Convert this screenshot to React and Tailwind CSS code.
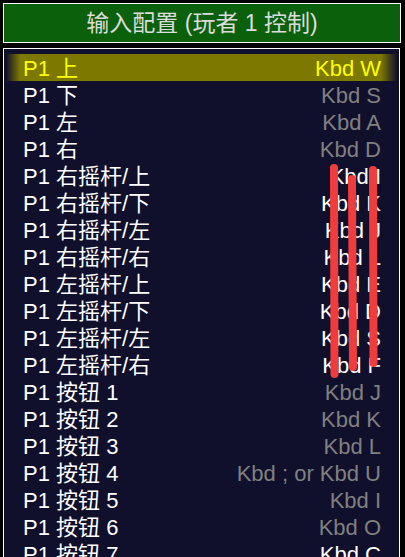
import React from 'react';

const rows = [
  { name: 'P1 上', key: 'Kbd W', selected: true },
  { name: 'P1 下', key: 'Kbd S' },
  { name: 'P1 左', key: 'Kbd A' },
  { name: 'P1 右', key: 'Kbd D' },
  { name: 'P1 右摇杆/上', key: 'Kbd I', changed: true },
  { name: 'P1 右摇杆/下', key: 'Kbd K', changed: true },
  { name: 'P1 右摇杆/左', key: 'Kbd J', changed: true },
  { name: 'P1 右摇杆/右', key: 'Kbd L', changed: true },
  { name: 'P1 左摇杆/上', key: 'Kbd E', changed: true },
  { name: 'P1 左摇杆/下', key: 'Kbd D', changed: true },
  { name: 'P1 左摇杆/左', key: 'Kbd S', changed: true },
  { name: 'P1 左摇杆/右', key: 'Kbd F', changed: true },
  { name: 'P1 按钮 1', key: 'Kbd J' },
  { name: 'P1 按钮 2', key: 'Kbd K' },
  { name: 'P1 按钮 3', key: 'Kbd L' },
  { name: 'P1 按钮 4', key: 'Kbd ; or Kbd U' },
  { name: 'P1 按钮 5', key: 'Kbd I' },
  { name: 'P1 按钮 6', key: 'Kbd O' },
  { name: 'P1 按钮 7', key: 'Kbd C', changed: true },
];

export default function App() {
  return (
    <div
      className="relative w-[405px] h-[557px] overflow-hidden bg-black text-[22px]"
      style={{ fontFamily: '"Liberation Sans", "Noto Sans CJK SC", sans-serif' }}
    >
      {/* title */}
      <div className="ml-[3px] mt-[3px] w-[398px] h-[40px] border border-white bg-[#0b600b] flex items-center justify-center text-[#dcdcdc] text-[23px] leading-none">
        输入配置 (玩者 1 控制)
      </div>

      {/* menu */}
      <div className="ml-[3px] mt-[5px] w-[397px] h-[520px] border border-white bg-[#10102c] pt-[5px] px-[2px]">
        {rows.map((r, i) => (
          <div
            key={i}
            className={
              'h-[27px] flex items-center justify-between pl-[17px] pr-[16px] leading-[27px] ' +
              (r.selected
                ? 'bg-[linear-gradient(to_right,transparent,#7d7800_14px,#7d7800_calc(100%_-_16px),transparent)] text-[#ffff00]'
                : 'text-white')
            }
          >
            <span className="pt-px">{r.name}</span>
            <span
              className={
                'pt-px ' +
                (r.selected ? 'text-[#ffff00]' : r.changed ? 'text-white' : 'text-[#808080]')
              }
            >
              {r.key}
            </span>
          </div>
        ))}
      </div>

      {/* red marker strokes */}
      <svg className="absolute left-0 top-0" width="405" height="557">
        <g stroke="#f03c3c" strokeWidth="8" strokeLinecap="round" fill="none">
          <line x1="334" y1="168" x2="334.5" y2="374" />
          <line x1="352" y1="179" x2="353" y2="367" />
          <line x1="373" y1="170" x2="373.5" y2="363" />
        </g>
      </svg>
    </div>
  );
}
